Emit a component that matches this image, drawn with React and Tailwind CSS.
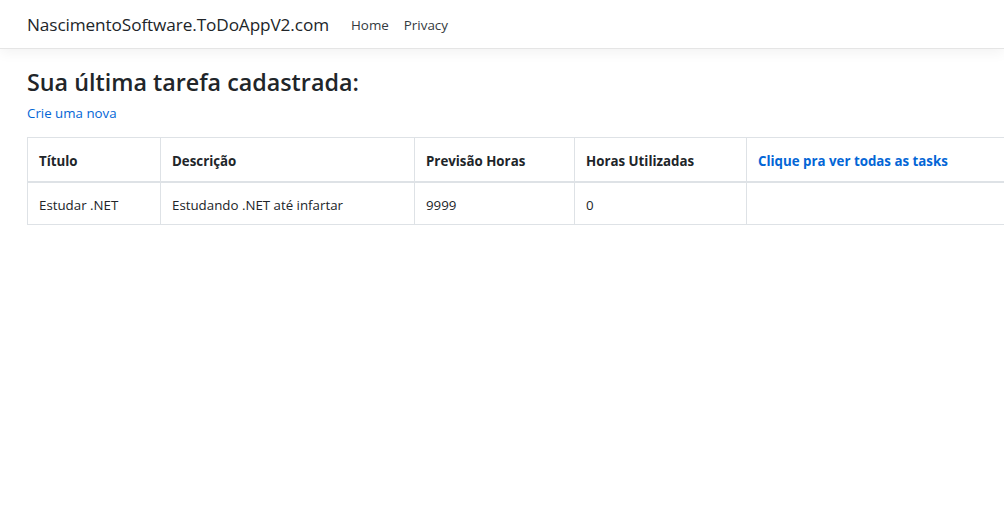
export default function App() {
  const f = { fontFamily: '"Open Sans", "Noto Sans", sans-serif' };
  return (
    <div className="min-h-[507px] bg-white text-[#212529]" style={f}>
      <header className="h-[49px] border-b border-[#e5e5e5] shadow-[0_4px_12px_rgba(0,0,0,0.05)] bg-white flex items-center px-[27px] pt-[1px]">
        <span className="text-[17.2px] text-[#212529] mr-[22px] tracking-[-0.1px]">NascimentoSoftware.ToDoAppV2.com</span>
        <nav className="flex gap-[15px] text-[13.4px] text-[#343a40] pt-[2px]">
          <a>Home</a>
          <a>Privacy</a>
        </nav>
      </header>
      <main className="px-[27px] pt-[17px]">
        <h1 className="text-[23.3px] font-semibold leading-[32px] text-[#212529]">Sua última tarefa cadastrada:</h1>
        <a className="block mt-[5px] text-[13.3px] text-[#0366d6] leading-[20px]">Crie uma nova</a>
        <table className="mt-[14px] w-[1000px] border-collapse text-[13.3px] leading-[20px]">
          <thead>
            <tr className="h-[44px]">
              <th className="border border-b-2 border-[#dee2e6] px-[11px] pt-[3px] text-left font-bold w-[133px]">Título</th>
              <th className="border border-b-2 border-[#dee2e6] px-[11px] pt-[3px] text-left font-bold w-[254px]">Descrição</th>
              <th className="border border-b-2 border-[#dee2e6] px-[11px] pt-[3px] text-left font-bold w-[160px]">Previsão Horas</th>
              <th className="border border-b-2 border-[#dee2e6] px-[11px] pt-[3px] text-left font-bold w-[172px]">Horas Utilizadas</th>
              <th className="border border-b-2 border-[#dee2e6] px-[11px] pt-[3px] text-left font-bold text-[#0366d6]">Clique pra ver todas as tasks</th>
            </tr>
          </thead>
          <tbody>
            <tr className="h-[43px]">
              <td className="border border-[#dee2e6] px-[11px] pt-[3px]">Estudar .NET</td>
              <td className="border border-[#dee2e6] px-[11px] pt-[3px]">Estudando .NET até infartar</td>
              <td className="border border-[#dee2e6] px-[11px] pt-[3px]">9999</td>
              <td className="border border-[#dee2e6] px-[11px] pt-[3px]">0</td>
              <td className="border border-[#dee2e6] px-[11px] pt-[3px]"></td>
            </tr>
          </tbody>
        </table>
      </main>
    </div>
  );
}
